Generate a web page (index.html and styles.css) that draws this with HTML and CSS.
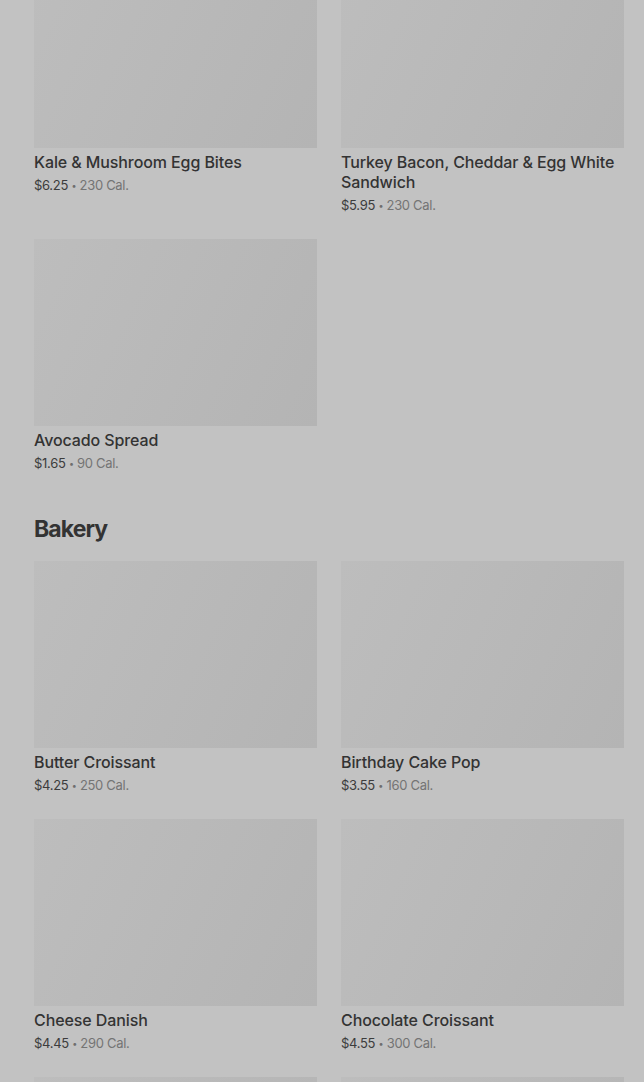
FILE: index.html
```html
<!DOCTYPE html>
<html lang="en">
<head>
<meta charset="utf-8">
<title>Menu</title>
<link rel="stylesheet" href="styles.css">
</head>
<body>
<main class="page">
  <section class="grid grid-first">
    <article class="card">
      <div class="thumb"></div>
      <h3 class="name">Kale &amp; Mushroom Egg Bites</h3>
      <p class="meta"><span class="price">$6.25</span> <span class="dot">•</span> <span class="cal">230 Cal.</span></p>
    </article>
    <article class="card">
      <div class="thumb"></div>
      <h3 class="name">Turkey Bacon, Cheddar &amp; Egg White Sandwich</h3>
      <p class="meta"><span class="price">$5.95</span> <span class="dot">•</span> <span class="cal">230 Cal.</span></p>
    </article>
    <article class="card">
      <div class="thumb"></div>
      <h3 class="name">Avocado Spread</h3>
      <p class="meta"><span class="price">$1.65</span> <span class="dot">•</span> <span class="cal">90 Cal.</span></p>
    </article>
  </section>

  <h2 class="section-title">Bakery</h2>

  <section class="grid">
    <article class="card">
      <div class="thumb"></div>
      <h3 class="name">Butter Croissant</h3>
      <p class="meta"><span class="price">$4.25</span> <span class="dot">•</span> <span class="cal">250 Cal.</span></p>
    </article>
    <article class="card">
      <div class="thumb"></div>
      <h3 class="name">Birthday Cake Pop</h3>
      <p class="meta"><span class="price">$3.55</span> <span class="dot">•</span> <span class="cal">160 Cal.</span></p>
    </article>
    <article class="card">
      <div class="thumb"></div>
      <h3 class="name">Cheese Danish</h3>
      <p class="meta"><span class="price">$4.45</span> <span class="dot">•</span> <span class="cal">290 Cal.</span></p>
    </article>
    <article class="card">
      <div class="thumb"></div>
      <h3 class="name">Chocolate Croissant</h3>
      <p class="meta"><span class="price">$4.55</span> <span class="dot">•</span> <span class="cal">300 Cal.</span></p>
    </article>
    <article class="card">
      <div class="thumb"></div>
    </article>
    <article class="card">
      <div class="thumb"></div>
    </article>
  </section>
</main>
</body>
</html>
```

FILE: styles.css
```css
* { box-sizing: border-box; }

html, body {
  margin: 0;
  padding: 0;
  background: #c2c2c2;
  height: 100%;
  overflow: hidden;
}

body {
  font-family: "Inter", "Roboto", "Liberation Sans", sans-serif;
  color: #333333;
}

.page {
  padding: 0 20px 0 34px;
}

.grid {
  display: grid;
  grid-template-columns: 283px 283px;
  column-gap: 24px;
  row-gap: 24px;
  align-items: start;
}

.grid-first {
  margin-top: -39px;
}

.card {
  display: flex;
  flex-direction: column;
}

.thumb {
  height: 187px;
  flex: none;
  background: linear-gradient(115deg, #bdbdbd 0%, #b9b9b9 45%, #b4b4b4 100%);
}

.name {
  margin: 4px 0 0;
  font-size: 16px;
  line-height: 20px;
  font-weight: 500;
  color: #333333;
  letter-spacing: -0.1px;
}

.meta {
  margin: 3px 0 0;
  height: 20px;
  overflow: hidden;
  font-size: 13px;
  line-height: 20px;
  color: #3c3c3c;
  letter-spacing: -0.3px;
}

.dot {
  color: #6e6e6e;
  font-size: 9px;
  line-height: 1;
  vertical-align: 1px;
}

.cal {
  color: #747474;
}

.section-title {
  margin: 40px 0 16px;
  height: 32px;
  font-size: 23px;
  line-height: 32px;
  font-weight: 700;
  color: #333333;
  letter-spacing: -0.9px;
}
```
